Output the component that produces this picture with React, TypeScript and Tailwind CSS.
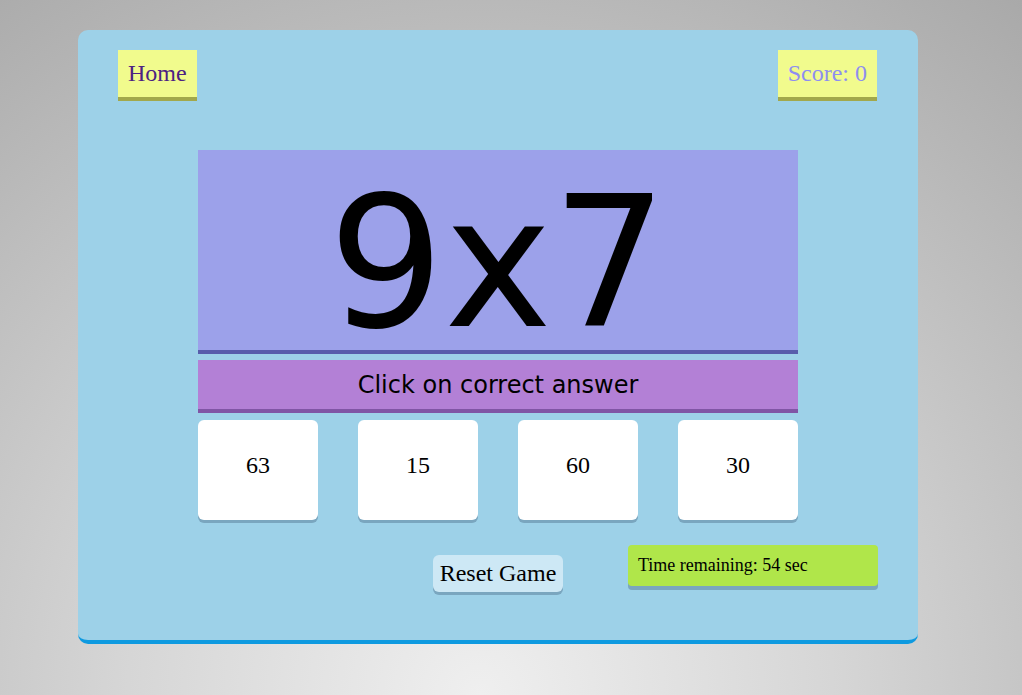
import React from "react";

export default function App() {
  const answers = ["63", "15", "60", "30"];
  return (
    <div className="h-[695px] w-full overflow-hidden bg-[radial-gradient(circle_at_47%_100%,#efefef_0%,#d6d6d6_40%,#a9a9a9_100%)] pt-[30px] pl-[78px] [font-family:'Liberation_Serif',serif]">
      <div className="w-[840px] rounded-[10px] border-b-4 border-[#0e9ae0] bg-[#9dd1e8] pb-[48px]">
        <div className="flex justify-between pl-[40px] pr-[41px] pt-[20px]">
          <div className="border-b-4 border-[#a2a84b] bg-[#f1fb8d] px-[10px] py-[10px] text-[24px] leading-[27px] text-[#4d2283]">
            Home
          </div>
          <div className="border-b-4 border-[#a2a84b] bg-[#f1fb8d] px-[10px] py-[10px] text-[24px] leading-[27px] text-[#8e8ef0]">
            Score: 0
          </div>
        </div>

        <div className="ml-[120px] mt-[49px] w-[600px]">
          <div className="h-[204px] border-b-4 border-[#585dab] bg-[#9ca1ea] text-center text-[182px] leading-[226px] text-black [font-family:'DejaVu_Sans',sans-serif]">
            9x7
          </div>
          <div className="mt-[6px] h-[53px] border-b-4 border-[#8055a5] bg-[#b380d6] pt-[2px] text-center text-[24px] leading-[47px] text-black [font-family:'DejaVu_Sans',sans-serif]">
            Click on correct answer
          </div>
          <div className="mt-[7px] flex gap-[40px]">
            {answers.map((a) => (
              <div
                key={a}
                className="h-[100px] w-[120px] rounded-[6px] bg-white pt-[27px] text-center text-[24px] text-black shadow-[0_3px_0_#7aa6bf]"
              >
                {a}
              </div>
            ))}
          </div>
        </div>

        <div className="mt-[25px] grid grid-cols-[1fr_auto_1fr] items-start px-[40px]">
          <div />
          <div className="mt-[10px] rounded-[6px] bg-[#cde8f5] px-[7px] py-[5px] text-[24px] leading-[27px] text-black shadow-[0_3px_0_#7aa6bf]">
            Reset Game
          </div>
          <div className="justify-self-end">
            <div className="h-[41px] w-[250px] rounded-[4px] bg-[#b0e64a] pl-[10px] pt-[10px] text-[18px] leading-[21px] text-black shadow-[0_4px_0_#7aa6bf]">
              Time remaining: 54 sec
            </div>
          </div>
        </div>
      </div>
    </div>
  );
}
